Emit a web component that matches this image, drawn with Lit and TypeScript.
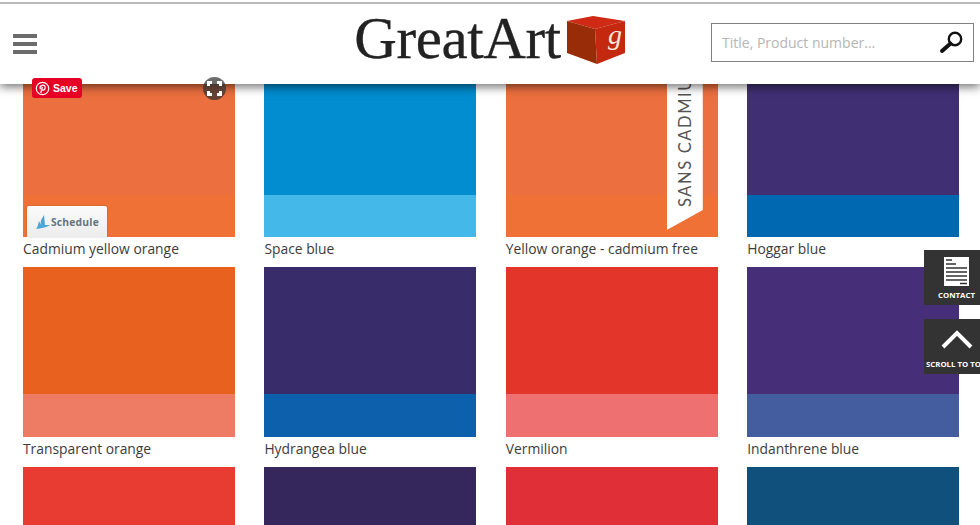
import { LitElement, html, css, svg } from 'lit';
import { customElement } from 'lit/decorators.js';

interface Swatch {
  name: string;
  main: string;
  band: string;
}

const swatches: Swatch[] = [
  { name: 'Cadmium yellow orange', main: '#ec6f3f', band: '#f07136' },
  { name: 'Space blue', main: '#018dcf', band: '#45b8ea' },
  { name: 'Yellow orange - cadmium free', main: '#ec6f3f', band: '#f07136' },
  { name: 'Hoggar blue', main: '#412f73', band: '#0068b0' },
  { name: 'Transparent orange', main: '#e9611f', band: '#ee7b63' },
  { name: 'Hydrangea blue', main: '#392c6b', band: '#0d60ab' },
  { name: 'Vermilion', main: '#e4352a', band: '#ee7070' },
  { name: 'Indanthrene blue', main: '#462f78', band: '#445d9f' },
  { name: '', main: '#e83c33', band: '#e83c33' },
  { name: '', main: '#35275c', band: '#35275c' },
  { name: '', main: '#e12f38', band: '#e12f38' },
  { name: '', main: '#10507c', band: '#10507c' },
];

const cube = svg`
  <svg class="cube" viewBox="0 0 59 48" width="59" height="48">
    <path d="M1 5 L27 0 L59 5 L29 13Z" fill="#cf2a16" />
    <path d="M1 5 L29 13 L31 48 L1 37Z" fill="#982b08" />
    <path d="M29 13 L59 5 L59 37 L31 48Z" fill="#c4280f" />
    <text x="49" y="28" text-anchor="middle" class="cube-mark">g</text>
  </svg>
`;

@customElement('app-root')
export class AppRoot extends LitElement {
  static styles = css`
    :host {
      display: block;
      position: relative;
      width: 980px;
      height: 525px;
      overflow: hidden;
      background: #fff;
      font-family: "Open Sans", sans-serif;
    }
    .header {
      position: absolute;
      inset: 0 0 auto 0;
      z-index: 5;
      height: 84px;
      box-sizing: border-box;
      background: #fff;
      border-top: 1px solid #fff;
      box-shadow: 0 3px 9px rgba(0, 0, 0, 0.55);
      display: grid;
      grid-template-columns: 1fr auto 1fr;
      align-items: center;
      padding: 0 6px 0 13px;
    }
    .header::before {
      content: '';
      position: absolute;
      inset: 1px 0 auto 0;
      height: 2px;
      background: #b9b9b9;
    }
    .burger {
      display: flex;
      flex-direction: column;
      gap: 4px;
      width: 24px;
      margin-top: 3px;
    }
    .burger span {
      height: 4px;
      background: #6b6b6b;
    }
    .logo {
      display: flex;
      align-items: center;
      gap: 5px;
      margin: -8px 0 0 -8px;
      font-family: "Liberation Serif", serif;
      font-size: 59px;
      line-height: 1;
      letter-spacing: -0.4px;
      color: #222;
      -webkit-text-stroke: 0.3px #222;
    }
    .cube {
      margin-top: 2px;
    }
    .cube-mark {
      font-family: "Liberation Serif", serif;
      font-style: italic;
      font-size: 28px;
      letter-spacing: 0;
      fill: #f6e6dc;
      stroke: none;
      -webkit-text-stroke: 0;
    }
    .search {
      justify-self: end;
      box-sizing: border-box;
      width: 263px;
      height: 39px;
      margin-top: -1px;
      border: 1px solid #808080;
      display: flex;
      align-items: center;
      justify-content: space-between;
      padding: 0 8px 0 10px;
      font-size: 14px;
      color: #b5b5b5;
    }
    .grid {
      display: grid;
      grid-template-columns: repeat(4, 212px);
      column-gap: 29.4px;
      padding: 67px 0 0 23px;
    }
    .item {
      height: 200px;
    }
    .tile {
      position: relative;
      height: 170px;
      display: flex;
      flex-direction: column;
      justify-content: flex-end;
    }
    .band {
      height: 42px;
    }
    .item:nth-child(n + 5) .band {
      height: 43px;
    }
    .label {
      font-size: 13.85px;
      line-height: 24px;
      color: #3c3c3c;
    }
    .ribbon {
      position: absolute;
      top: 0;
      right: 15px;
      width: 36px;
      height: 163px;
      background: #fff;
      clip-path: polygon(0 0, 100% 0, 100% 143px, 0 100%);
    }
    .ribbon span {
      writing-mode: vertical-rl;
      transform: rotate(180deg);
      position: absolute;
      bottom: 23px;
      left: 9px;
      font-family: "Lato", sans-serif;
      font-size: 16.5px;
      line-height: 18px;
      letter-spacing: 1.6px;
      white-space: nowrap;
      color: #555;
    }
    .save {
      position: absolute;
      z-index: 6;
      top: 11px;
      left: 9px;
      width: 50px;
      height: 20px;
      box-sizing: border-box;
      border-radius: 3px;
      background: #e60023;
      color: #fff;
      display: flex;
      align-items: center;
      gap: 3px;
      padding-left: 3px;
      font-family: "Liberation Sans", sans-serif;
      font-size: 10.5px;
      font-weight: 700;
    }
    .focus {
      position: absolute;
      z-index: 6;
      top: 10px;
      left: 180px;
      width: 23px;
      height: 23px;
      border-radius: 50%;
      background: rgba(50, 50, 50, 0.72);
      display: flex;
      align-items: center;
      justify-content: center;
    }
    .schedule {
      position: absolute;
      left: 4px;
      bottom: 0;
      width: 80px;
      height: 31px;
      box-sizing: border-box;
      border-radius: 2px 2px 0 0;
      background: linear-gradient(#fbfbfb, #ececec);
      box-shadow: 0 0 2px rgba(0, 0, 0, 0.25);
      display: flex;
      align-items: center;
      gap: 1px;
      padding-left: 9px;
      font-size: 10.3px;
      font-weight: 700;
      color: #66747f;
      letter-spacing: 0.2px;
    }
    .side {
      position: absolute;
      top: 250px;
      left: 924px;
      z-index: 4;
      display: flex;
      flex-direction: column;
      gap: 14px;
    }
    .side-btn {
      width: 56px;
      height: 55px;
      box-sizing: border-box;
      padding-left: 2px;
      background: #333;
      color: #fff;
      display: flex;
      flex-direction: column;
      align-items: flex-start;
      font-size: 7.8px;
      font-weight: 700;
      white-space: nowrap;
      overflow: hidden;
    }
    .side-btn svg {
      flex: none;
    }
    .contact svg {
      margin: 7px 0 0 18px;
    }
    .contact span {
      margin: 4px 0 0 12px;
    }
    .top svg {
      margin: 10px 0 0 15px;
    }
    .top span {
      margin-top: 10px;
    }
  `;

  private renderOverlays(index: number) {
    if (index === 0) {
      return html`
        <div class="save">
          <svg width="15" height="15" viewBox="0 0 15 15">
            <circle cx="7.5" cy="7.5" r="6.2" fill="none" stroke="#fff" stroke-width="1.2" />
            <path d="M5.8 12 L7.4 6 M5.4 8.2 C4 5 8 3 9.8 5 C11.2 7 9.3 10 7 8.8"
              fill="none" stroke="#fff" stroke-width="1.3" />
          </svg>
          Save
        </div>
        <div class="focus">
          <svg width="15" height="15" viewBox="0 0 15 15" fill="none" stroke="#fff" stroke-width="3">
            <path d="M1.5 5V1.5H5M10 1.5H13.5V5M13.5 10V13.5H10M5 13.5H1.5V10" />
          </svg>
        </div>
        <div class="schedule">
          <svg width="14" height="16" viewBox="0 0 14 16">
            <path d="M0 15 C5 14 10 14 14 11 L9 11 L8 1 C6 5 4 6 5 11 L3 7 C2 10 2 13 0 15Z" fill="#4aa6da" />
          </svg>
          Schedule
        </div>
      `;
    }
    if (index === 2) {
      return html`<div class="ribbon"><span>SANS CADMIUM</span></div>`;
    }
    return null;
  }

  render() {
    return html`
      <header class="header">
        <div class="burger"><span></span><span></span><span></span></div>
        <div class="logo">GreatArt${cube}</div>
        <div class="search">
          Title, Product number...
          <svg width="28" height="24" viewBox="0 0 28 24" fill="none" stroke="#111">
            <circle cx="18" cy="9" r="6.2" stroke-width="2.4" />
            <path d="M13.5 13.5 L5 21" stroke-width="4" stroke-linecap="round" />
          </svg>
        </div>
      </header>

      <main class="grid">
        ${swatches.map((s, i) => html`
          <div class="item">
            <div class="tile" style="background:${s.main}">
              <div class="band" style="background:${s.band}"></div>
              ${this.renderOverlays(i)}
            </div>
            <div class="label">${s.name}</div>
          </div>
        `)}
      </main>

      <aside class="side">
        <div class="side-btn contact">
          <svg width="25" height="29" viewBox="0 0 25 29">
            <path d="M0 0H25V29H0Z" fill="#fff" />
            <path d="M2 3H8M2 7H12M2 11H23M2 15H23M2 19H23M2 23H23M16 26.5H23" stroke="#333" stroke-width="1.6" />
          </svg>
          <span>CONTACT</span>
        </div>
        <div class="side-btn top">
          <svg width="32" height="20" viewBox="0 0 32 20" fill="none" stroke="#fff" stroke-width="4">
            <path d="M2 18 L16 4 L30 18" />
          </svg>
          <span>SCROLL TO TOP</span>
        </div>
      </aside>
    `;
  }
}
